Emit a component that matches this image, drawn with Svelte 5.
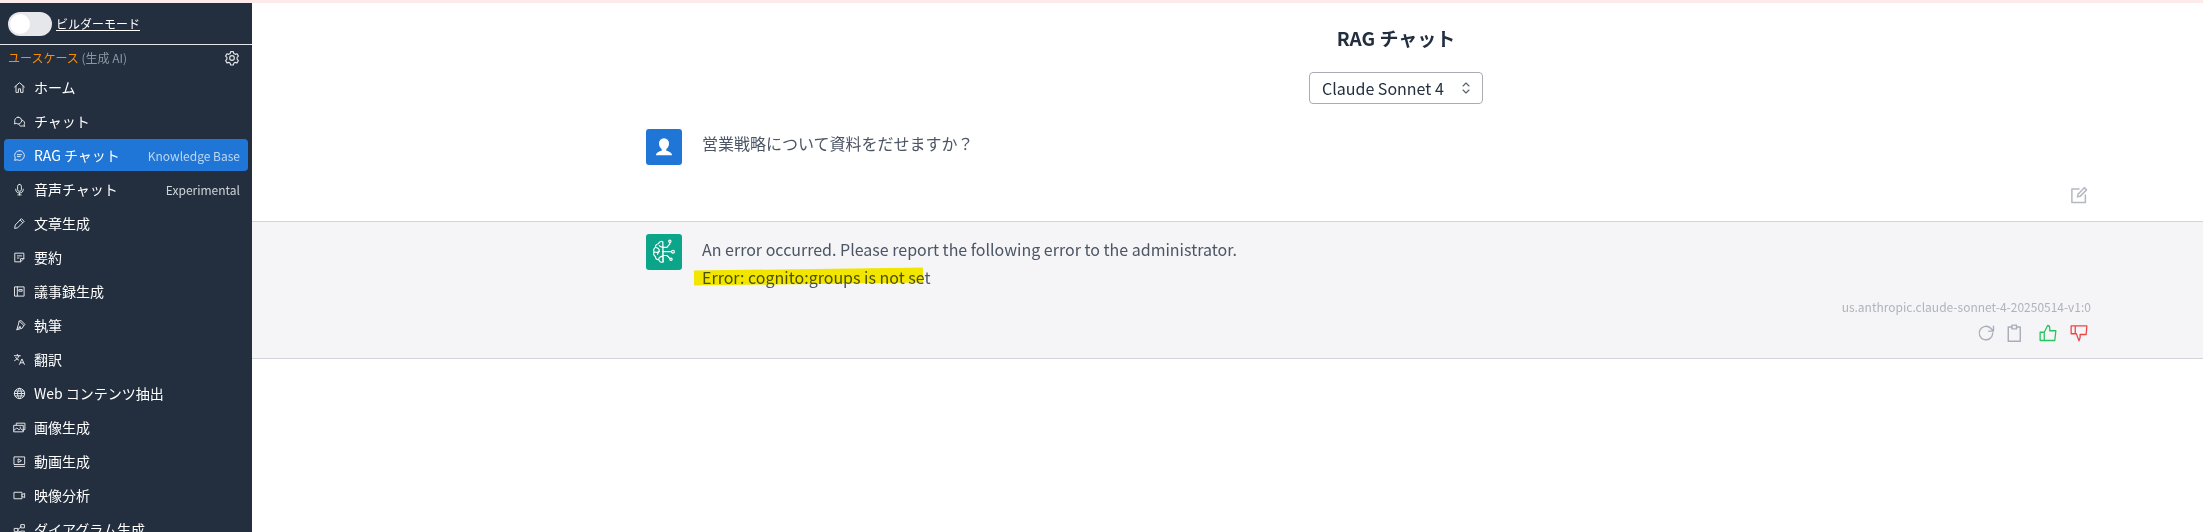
<script>
  const menu = [
    { label: 'ホーム', icon: 'home' },
    { label: 'チャット', icon: 'chats' },
    { label: 'RAG チャット', icon: 'rag', sub: 'Knowledge Base', active: true },
    { label: '音声チャット', icon: 'mic', sub: 'Experimental' },
    { label: '文章生成', icon: 'pencil' },
    { label: '要約', icon: 'note' },
    { label: '議事録生成', icon: 'notebook' },
    { label: '執筆', icon: 'pen' },
    { label: '翻訳', icon: 'translate' },
    { label: 'Web コンテンツ抽出', icon: 'globe' },
    { label: '画像生成', icon: 'photos' },
    { label: '動画生成', icon: 'video' },
    { label: '映像分析', icon: 'camera' },
    { label: 'ダイアグラム生成', icon: 'nodes' },
  ];

  const icons = {
    home: 'M3 11l9-8 9 8M5.5 9.5V21h4.5v-6.5h4V21h4.5V9.5',
    chats: 'M9.5 4a6.5 6.5 0 0 0-6 9l-1 3.5 3.5-1a6.5 6.5 0 0 0 10-5.5 6.5 6.5 0 0 0-6.5-6zM17 9.5a5.5 5.5 0 0 1 3.6 8.2l.9 3.3-3.3-.9a5.5 5.5 0 0 1-7.6-2.6',
    rag: 'M12 3a9 9 0 0 0-7.8 13.5L3 21l4.5-1.2A9 9 0 1 0 12 3zM8 10.5h8M8 14h5.5',
    mic: 'M12 2.5a3.5 3.5 0 0 0-3.5 3.5v6a3.5 3.5 0 0 0 7 0V6A3.5 3.5 0 0 0 12 2.5zM5 11.5a7 7 0 0 0 14 0M12 18.5V22M9 22h6',
    pencil: 'M16 3.5l4.5 4.5L8.5 20 3 21l1-5.5zM13.5 6l4.5 4.5',
    note: 'M4 4h16v10l-6 6H4zM20 14h-6v6M8 9h8M8 13h3',
    notebook: 'M3.5 3.5h17v17h-17zM8 3.5v17M11.5 8.5h5.5v3h-5.5z',
    pen: 'M12 4l8 8-3 5-10 3 3-10zM7 20l5-5M12 4l2-2 8 8-2 2M12.8 14.2a1.2 1.2 0 1 0 .01 0',
    translate: 'M2.5 5h11M8 2.5V5M11 5c-1 4-4 7-8 9M5 8c1 2.5 3 4 5.5 5M12 21l4.5-10 4.5 10M13.5 18h6',
    globe: 'M12 2.5a9.5 9.5 0 1 0 0 19 9.5 9.5 0 0 0 0-19zM2.5 12h19M3.8 7.5h16.4M3.8 16.5h16.4M12 2.5c-5 5-5 14 0 19M12 2.5c5 5 5 14 0 19',
    photos: 'M6 7V4h16v12h-3M2 8h17v12H2zM2 17l5-4 4 3 3-2 5 4M13 11.5h1',
    video: 'M2.5 3.5h19v14h-19zM2.5 21h19M10 7.5l5.5 3-5.5 3z',
    camera: 'M2.5 6h14v12h-14zM16.5 10.5L21.5 8v8l-5-2.5',
    nodes: 'M3 10h6v6H3zM15 3h6v6h-6zM15 15h6v6h-6zM9 12l6-5M9 14l6 4',
  };

  // left lobes of the brain plus the circuit lines leaving it on the right
  const brainLobes = 'M11 3.2c-1.6-.7-3.3.1-3.7 1.7-1.6.1-2.8 1.5-2.5 3.1-1.5.7-2.1 2.5-1.3 3.9-.8 1.4-.3 3.2 1.2 3.9 0 1.6 1.2 2.8 2.8 2.8.4 1.7 2.3 2.7 3.9 1.9zM11 3.2v17.3M5 8c1.5.2 2.5 1 3 2.2M4 12c1.5.6 3 .4 4.2-.6M8 10.2L6.5 14M7.3 18.6c.1-1.5 1-2.6 3.7-3.1M8 6.5c.8 1 1.8 1.4 3 1.3';
  const brainTraces = 'M11 8h3.5l2.5-3V3.8M11 11.7h7.5M11 15h3.5l2.5 2.5';
</script>

<div class="page">
  <aside class="sidebar">
    <div class="builder">
      <span class="toggle"><span class="knob"></span></span>
      <span class="builder-label">ビルダーモード</span>
    </div>
    <div class="usecase">
      <span><span class="orange">ユースケース</span> (生成 AI)</span>
      <svg class="gear" viewBox="0 0 24 24" fill="none" stroke="currentColor" stroke-width="1.7" stroke-linejoin="round">
        <path d="M10 2.5h4l.7 2.8 2.1 1.2 2.8-.8 2 3.5-2 2 .1 1.3-.1 1.3 2 2-2 3.5-2.8-.8-2.1 1.2-.7 2.8h-4l-.7-2.8-2.1-1.2-2.8.8-2-3.5 2-2-.1-1.3.1-1.3-2-2 2-3.5 2.8.8 2.1-1.2z" />
        <circle cx="12" cy="12" r="3.5" />
      </svg>
    </div>
    <nav class="menu">
      {#each menu as item (item.label)}
        <div class="item" class:active={item.active}>
          <svg class="icon" viewBox="0 0 24 24" fill="none" stroke="currentColor" stroke-width="1.8" stroke-linecap="round" stroke-linejoin="round">
            <path d={icons[item.icon]} />
          </svg>
          <span class="label">{item.label}</span>
          {#if item.sub}
            <span class="sub">{item.sub}</span>
          {/if}
        </div>
      {/each}
    </nav>
  </aside>

  <main class="main">
    <h1 class="title">RAG チャット</h1>
    <div class="select-wrap">
      <div class="select">
        <span>Claude Sonnet 4</span>
        <svg class="updown" viewBox="0 0 10 16" fill="none" stroke="currentColor" stroke-width="1.1" stroke-linecap="round" stroke-linejoin="round">
          <path d="M2 6l3-3 3 3M2 10l3 3 3-3" />
        </svg>
      </div>
    </div>

    <section class="message user">
      <div class="message-inner">
        <div class="avatar blue">
          <svg viewBox="0 0 24 24" fill="#fff"><path d="M12 4.5a4.3 4.3 0 0 0-4.3 4.500c0 2.200 1 3.800 2.300 4.700v1.500c-2.200.6-4.500 1.300-5 3.800h14c-.5-2.500-2.800-3.200-5-3.800v-1.500c1.300-.9 2.300-2.500 2.300-4.700A4.300 4.300 0 0 0 12 4.500z" /></svg>
        </div>
        <p class="question">営業戦略について資料をだせますか？</p>
      </div>
      <div class="actions edit">
        <svg class="action" viewBox="0 0 24 24" fill="none" stroke="#b4b8c2" stroke-width="2" stroke-linejoin="round" stroke-linecap="round">
          <path d="M12 4H2.500v18h18v-10M10 14.500l.7-3.500L19 2.200 22 5.200 13.500 13.800z" />
        </svg>
      </div>
    </section>

    <section class="message bot">
      <div class="message-inner">
        <div class="avatar green">
          <svg viewBox="0 0 24 24" fill="none" stroke="#fff" stroke-width="1" stroke-linecap="round" stroke-linejoin="round">
            <path d={brainLobes} />
            <path d={brainTraces} />
            <circle cx="17" cy="2.800" r="1" />
            <circle cx="19.700" cy="11.700" r="1.200" />
            <circle cx="18" cy="18.200" r="1" />
          </svg>
        </div>
        <div class="answer">
          <p>An error occurred. Please report the following error to the administrator.</p>
          <p class="error-line"><span>Error: cognito:groups is not set</span><span class="marker"></span></p>
        </div>
      </div>
      <div class="model">us.anthropic.claude-sonnet-4-20250514-v1:0</div>
      <div class="actions">
        <svg class="action" viewBox="0 0 24 24" fill="none" stroke="#a9adb8" stroke-width="1.800" stroke-linecap="round" stroke-linejoin="round">
          <path d="M21 12a9 9 0 1 1-2.700-6.400L22 9.500M22 3v6.500h-6.500" />
        </svg>
        <svg class="action clip" viewBox="0 0 24 24" fill="none" stroke="#a9adb8" stroke-width="1.900" stroke-linejoin="round">
          <path d="M8 4H3v19h16V4h-5M8 1.500h6V6.500H8z" />
        </svg>
        <svg class="action" viewBox="0 0 24 24" fill="none" stroke="#22c55e" stroke-width="1.700" stroke-linejoin="round">
          <path d="M1.500 11h5.500v11H1.500zM7 11l4.500-9c1.800 0 2.800 1.200 2.800 3v4h8.200L21 22H7" />
        </svg>
        <svg class="action" viewBox="0 0 24 24" fill="none" stroke="#ef4444" stroke-width="1.700" stroke-linejoin="round">
          <path d="M1.500 2.500H7v10.500H1.500zM7 2.500h15.500l-1 11.500h-8v4l-1.500 4.500-3.500-9.500H7" />
        </svg>
      </div>
    </section>
  </main>
</div>

<style>
  :global(body) {
    margin: 0;
    overflow: hidden;
    background: #fff;
  }

  .page {
    display: flex;
    width: 2203px;
    height: 532px;
    overflow: hidden;
    border-top: 3px solid #fdeaea;
    box-sizing: border-box;
    font-family: "Noto Sans CJK JP", "Noto Sans", sans-serif;
    color: #232f3e;
  }

  .sidebar {
    width: 252px;
    flex: none;
    background: #232f3e;
    color: #fff;
    overflow: hidden;
  }

  .builder {
    display: flex;
    align-items: center;
    gap: 4px;
    height: 41px;
    padding-left: 8px;
    border-bottom: 1px solid #e5e7eb;
  }

  .toggle {
    display: block;
    width: 44px;
    height: 24px;
    border-radius: 12px;
    background: #e5e7eb;
    position: relative;
  }

  .knob {
    position: absolute;
    left: 2px;
    top: 2px;
    width: 20px;
    height: 20px;
    border-radius: 50%;
    background: #fff;
  }

  .builder-label {
    font-size: 12px;
    line-height: 16px;
    text-decoration: underline;
  }

  .usecase {
    display: flex;
    align-items: center;
    justify-content: space-between;
    height: 25px;
    padding: 0 12px 0 8px;
    font-size: 12px;
    color: #8d96a3;
  }

  .orange {
    color: #ff8c00;
  }

  .gear {
    width: 16px;
    height: 16px;
    color: #e5e7eb;
  }

  .menu {
    display: flex;
    flex-direction: column;
    gap: 2px;
    padding: 1px 4px 0;
  }

  .item {
    display: flex;
    align-items: center;
    height: 32px;
    padding: 0 8px 0 9px;
    border-radius: 4px;
    font-size: 14px;
    color: #fff;
  }

  .item.active {
    background: #1f76d6;
  }

  .icon {
    width: 13px;
    height: 13px;
    flex: none;
    margin-right: 8px;
    color: #e5e7eb;
  }

  .label {
    flex: 1;
    white-space: nowrap;
  }

  .sub {
    font-size: 12px;
    color: #cfd4da;
  }

  .active .sub {
    color: #bcd6f2;
  }

  .main {
    flex: 1;
    min-width: 0;
  }

  /* the original window is wider than this crop, so the heading sits right of centre */
  .title {
    margin: 0;
    padding: 21px 0 0 337px;
    font-size: 19px;
    line-height: 28px;
    font-weight: 600;
    text-align: center;
    color: #232f3e;
  }

  .select-wrap {
    display: flex;
    justify-content: center;
    margin-top: 20px;
    padding-left: 337px;
  }

  .select {
    display: flex;
    align-items: center;
    justify-content: space-between;
    width: 174px;
    height: 32px;
    padding: 0 11px 0 12px;
    box-sizing: border-box;
    border: 1px solid #a9adb3;
    border-radius: 4px;
    font-size: 16px;
  }

  .updown {
    width: 10px;
    height: 16px;
    color: #555e6a;
  }

  .message {
    position: relative;
    padding-left: 394px;
    padding-right: 115px;
    box-sizing: border-box;
  }

  .message-inner {
    display: flex;
    align-items: flex-start;
  }

  .user {
    height: 93px;
    margin-top: 25px;
    border-bottom: 1px solid #d1d5db;
  }

  .bot {
    height: 137px;
    background: #f5f5f8;
    border-bottom: 1px solid #d1d5db;
  }

  .avatar {
    width: 36px;
    height: 36px;
    flex: none;
    border-radius: 3px;
    display: flex;
    align-items: center;
    justify-content: center;
  }

  .avatar svg {
    width: 28px;
    height: 28px;
  }

  .blue {
    background: #1f76d6;
  }

  .green {
    background: #0ba58a;
    margin-top: 12px;
  }

  .question {
    margin: 2px 0 0 20px;
    font-size: 16px;
    line-height: 24px;
    color: #4b5563;
  }

  .answer {
    margin: 13px 0 0 20px;
    font-size: 16px;
    line-height: 28px;
    color: #4b5563;
  }

  .answer p {
    margin: 0;
  }

  .error-line {
    position: relative;
  }

  /* hand-drawn highlighter over the error text */
  .marker {
    position: absolute;
    left: -8px;
    top: 6px;
    width: 229px;
    height: 15px;
    background: #fcf000;
    mix-blend-mode: multiply;
    transform: rotate(-0.8deg);
  }

  .actions {
    display: flex;
    justify-content: flex-end;
    gap: 13px;
  }

  .edit {
    position: absolute;
    right: 115px;
    top: 57px;
  }

  .action {
    width: 18px;
    height: 18px;
  }

  .clip {
    margin-left: -2px;
    margin-right: 2px;
  }

  .model {
    margin-top: 8px;
    margin-right: -3px;
    margin-bottom: 9px;
    text-align: right;
    font-size: 12px;
    line-height: 16px;
    color: #aeb3bd;
  }
</style>
